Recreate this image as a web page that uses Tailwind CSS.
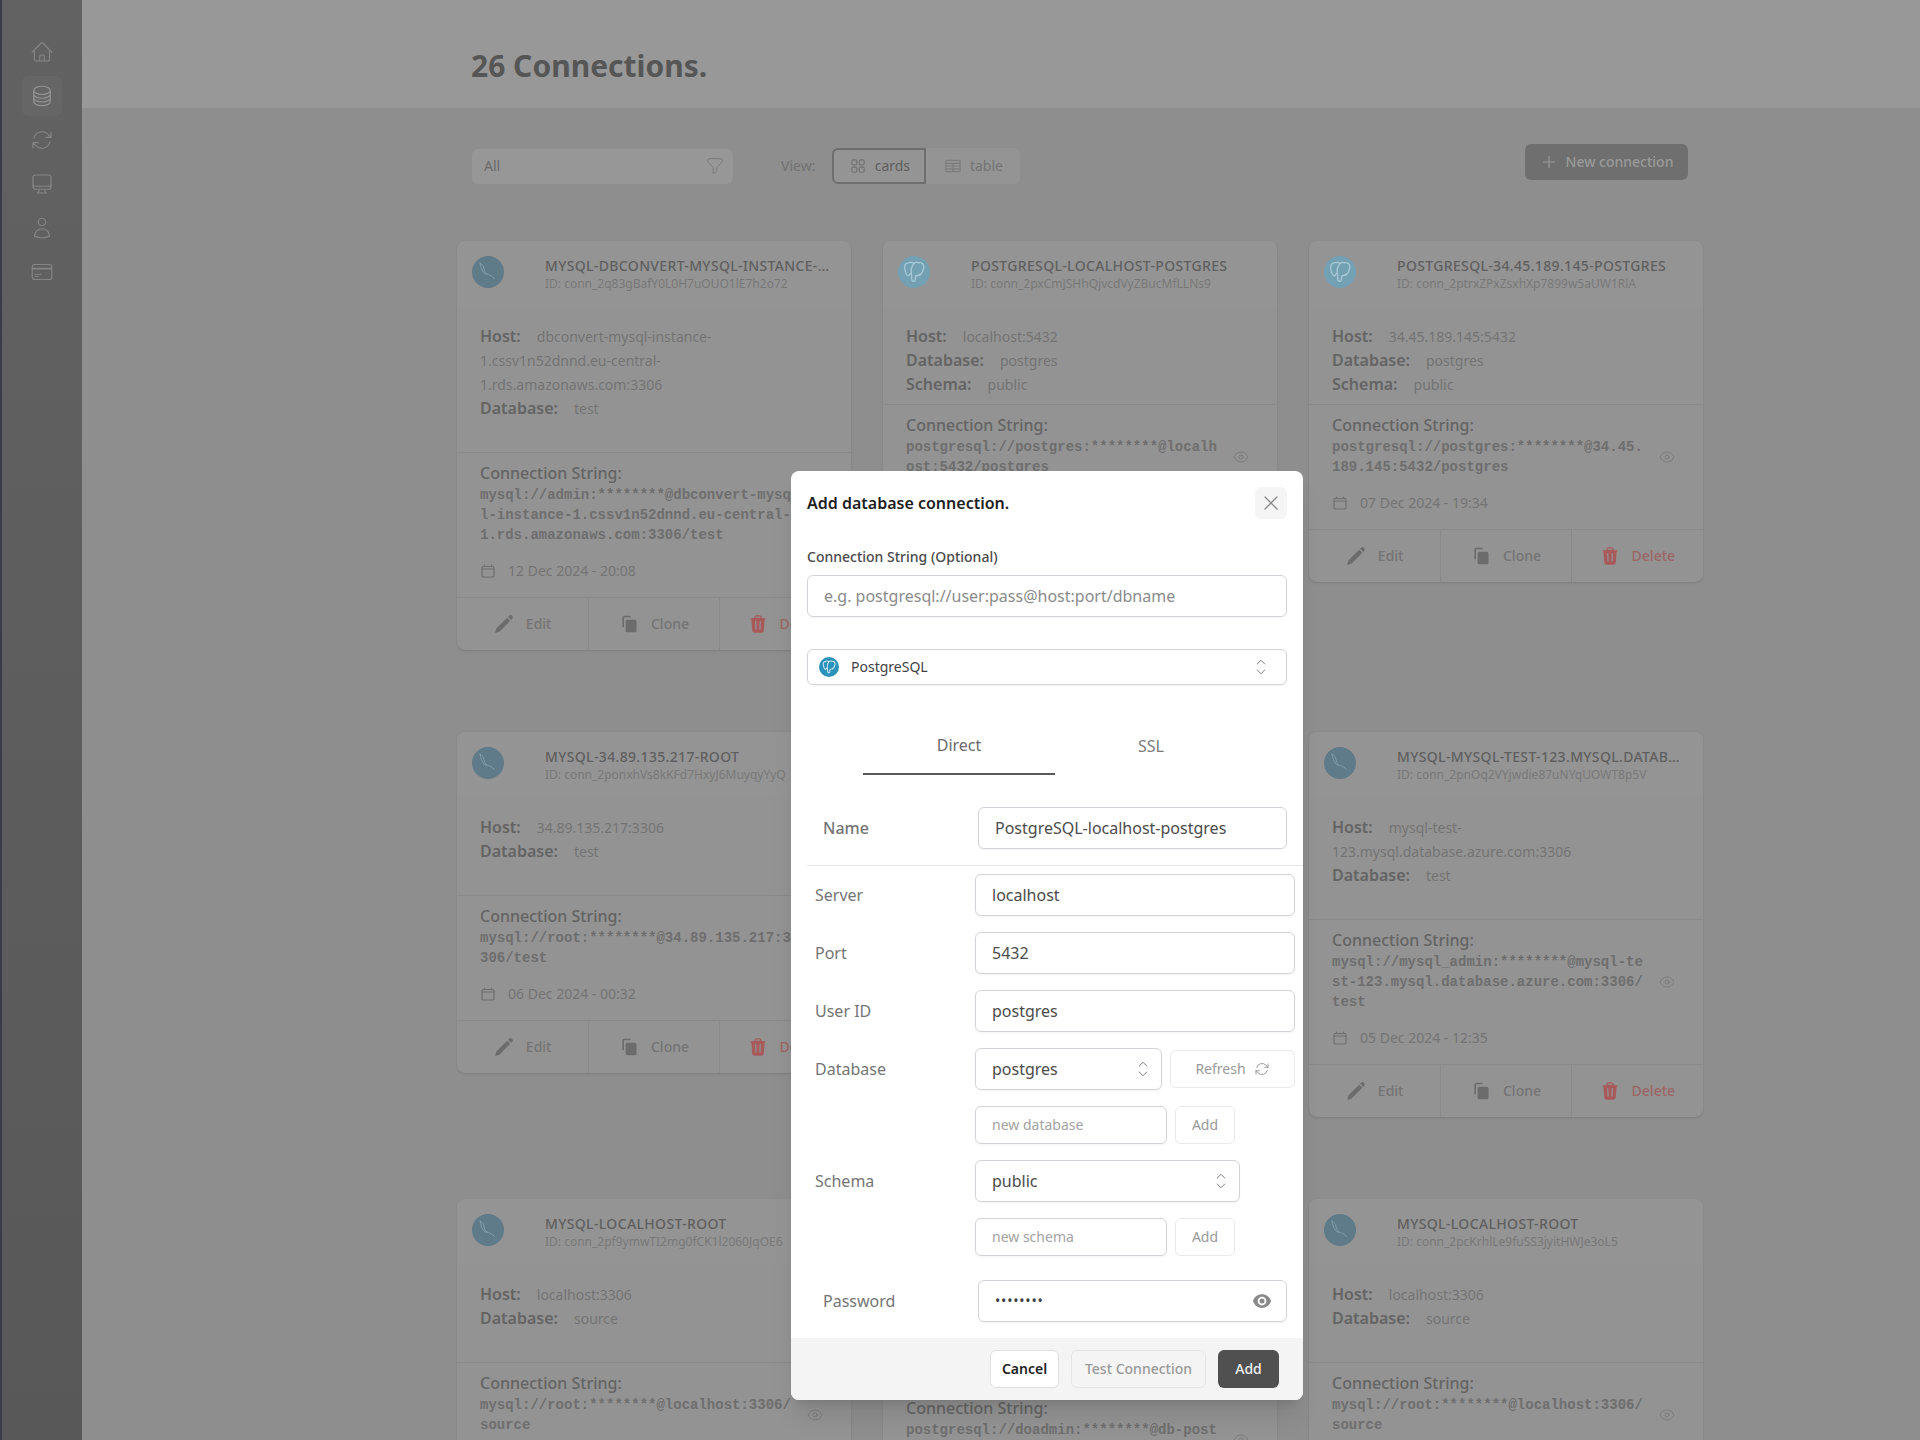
<!DOCTYPE html>
<html lang="en">
<head>
<meta charset="UTF-8">
<title>Connections</title>
<script src="https://cdn.jsdelivr.net/npm/@tailwindcss/browser@4"></script>
</head>
<body class="h-screen overflow-hidden bg-[#8e8e8e] font-['Noto_Sans',sans-serif]">
<div class="flex h-screen">

  <!-- sidebar, colours are the dimmed ones seen behind the modal -->
  <aside class="w-[82px] shrink-0 h-full border-l-2 border-[#3a3a48] bg-gradient-to-b from-[#626262] to-[#585858] pt-[30px] flex flex-col items-center text-[#858585]">
    <a class="w-10 h-11 flex items-center justify-center"><svg class="w-6 h-6" fill="none" viewBox="0 0 24 24" stroke="currentColor" stroke-width="1.2"><path stroke-linecap="round" stroke-linejoin="round" d="m2.25 12 8.954-8.955c.44-.439 1.152-.439 1.591 0L21.75 12M4.5 9.75v10.125c0 .621.504 1.125 1.125 1.125H9.75v-4.875c0-.621.504-1.125 1.125-1.125h2.25c.621 0 1.125.504 1.125 1.125V21h4.125c.621 0 1.125-.504 1.125-1.125V9.75M8.25 21h8.25"/></svg></a>
    <a class="w-10 h-10 my-[2px] flex items-center justify-center rounded-md bg-[#666666] text-[#959595]"><svg class="w-6 h-6" fill="none" viewBox="0 0 24 24" stroke="currentColor" stroke-width="1.2"><path stroke-linecap="round" stroke-linejoin="round" d="M20.25 6.375c0 2.278-3.694 4.125-8.25 4.125S3.75 8.653 3.75 6.375m16.5 0c0-2.278-3.694-4.125-8.25-4.125S3.75 4.097 3.75 6.375m16.5 0v11.25c0 2.278-3.694 4.125-8.25 4.125s-8.25-1.847-8.25-4.125V6.375m16.5 0v3.75m-16.5-3.75v3.75m16.5 0v3.75C20.25 16.153 16.556 18 12 18s-8.25-1.847-8.25-4.125v-3.75m16.5 0c0 2.278-3.694 4.125-8.25 4.125s-8.25-1.847-8.25-4.125"/></svg></a>
    <a class="w-10 h-11 flex items-center justify-center"><svg class="w-6 h-6" fill="none" viewBox="0 0 24 24" stroke="currentColor" stroke-width="1.2"><path stroke-linecap="round" stroke-linejoin="round" d="M16.023 9.348h4.992v-.001M2.985 19.644v-4.992m0 0h4.992m-4.993 0 3.181 3.183a8.25 8.25 0 0 0 13.803-3.7M4.031 9.865a8.25 8.25 0 0 1 13.803-3.7l3.181 3.182m0-4.991v4.99"/></svg></a>
    <a class="w-10 h-11 flex items-center justify-center"><svg class="w-6 h-6" fill="none" viewBox="0 0 24 24" stroke="currentColor" stroke-width="1.2"><path stroke-linecap="round" stroke-linejoin="round" d="M9 17.25v1.007a3 3 0 0 1-.879 2.122L7.5 21h9l-.621-.621A3 3 0 0 1 15 18.257V17.25m6-12V15a2.25 2.25 0 0 1-2.25 2.25H5.25A2.25 2.25 0 0 1 3 15V5.25m18 0A2.25 2.25 0 0 0 18.75 3H5.25A2.25 2.25 0 0 0 3 5.25m18 0V12a2.25 2.25 0 0 1-2.25 2.25H5.25A2.25 2.25 0 0 1 3 12V5.25"/></svg></a>
    <a class="w-10 h-11 flex items-center justify-center"><svg class="w-6 h-6" fill="none" viewBox="0 0 24 24" stroke="currentColor" stroke-width="1.2"><path stroke-linecap="round" stroke-linejoin="round" d="M15.75 6a3.75 3.75 0 1 1-7.5 0 3.75 3.75 0 0 1 7.5 0ZM4.501 20.118a7.5 7.5 0 0 1 14.998 0A17.933 17.933 0 0 1 12 21.75c-2.676 0-5.216-.584-7.499-1.632Z"/></svg></a>
    <a class="w-10 h-11 flex items-center justify-center"><svg class="w-6 h-6" fill="none" viewBox="0 0 24 24" stroke="currentColor" stroke-width="1.2"><path stroke-linecap="round" stroke-linejoin="round" d="M2.25 8.25h19.5M2.25 9h19.5m-16.5 5.25h6m-6 2.25h3m-3.75 3h15a2.25 2.25 0 0 0 2.25-2.25V6.75A2.25 2.25 0 0 0 19.5 4.5h-15a2.25 2.25 0 0 0-2.25 2.25v10.5A2.25 2.25 0 0 0 4.5 19.5Z"/></svg></a>
  </aside>

  <main class="flex-1 min-w-0">
    <header class="h-[108px] bg-[#989898] pl-[389px] pt-[22px] flex items-center">
      <h1 class="text-[30px] font-bold text-[#565656]">26 Connections.</h1>
    </header>

    <!-- toolbar -->
    <div class="mt-9 pl-[390px] pr-[232px] h-10 flex items-start justify-between">
      <div class="flex items-center mt-1">
        <div class="w-[261px] h-[35px] rounded-md bg-[#979797] pl-3 pr-2 flex items-center justify-between text-sm text-[#6a6a6a]">
          <span>All</span>
          <svg class="w-5 h-5 text-[#7a7a7a]" fill="none" viewBox="0 0 24 24" stroke="currentColor" stroke-width="1.2"><path stroke-linecap="round" stroke-linejoin="round" d="M12 3c2.755 0 5.455.232 8.083.678.533.09.917.556.917 1.096v1.044a2.25 2.25 0 0 1-.659 1.591l-5.432 5.432a2.25 2.25 0 0 0-.659 1.591v2.927a2.25 2.25 0 0 1-1.244 2.013L9.75 21v-6.568a2.25 2.25 0 0 0-.659-1.591L3.659 7.409A2.25 2.25 0 0 1 3 5.818V4.774c0-.54.384-1.006.917-1.096A48.32 48.32 0 0 1 12 3Z"/></svg>
        </div>
        <span class="ml-12 mr-[17px] text-sm text-[#717171]">View:</span>
        <div class="flex h-9 rounded-md bg-[#949494] text-sm">
          <button class="w-[94px] flex items-center justify-center gap-2 rounded-l-md border-2 border-[#6e6e6e] text-[#5e5e5e]">
            <svg class="w-[18px] h-[18px] text-[#727272]" fill="none" viewBox="0 0 24 24" stroke="currentColor" stroke-width="1.5"><path stroke-linecap="round" stroke-linejoin="round" d="M3.75 6A2.25 2.25 0 0 1 6 3.75h2.25A2.25 2.25 0 0 1 10.5 6v2.25a2.25 2.25 0 0 1-2.25 2.25H6a2.25 2.25 0 0 1-2.25-2.25V6ZM3.75 15.75A2.25 2.25 0 0 1 6 13.5h2.25a2.25 2.25 0 0 1 2.25 2.25V18a2.25 2.25 0 0 1-2.25 2.25H6A2.25 2.25 0 0 1 3.75 18v-2.25ZM13.5 6a2.25 2.25 0 0 1 2.25-2.25H18A2.25 2.25 0 0 1 20.25 6v2.25A2.25 2.25 0 0 1 18 10.5h-2.25a2.25 2.25 0 0 1-2.25-2.25V6ZM13.5 15.75a2.25 2.25 0 0 1 2.25-2.25H18a2.25 2.25 0 0 1 2.25 2.25V18A2.25 2.25 0 0 1 18 20.25h-2.25A2.25 2.25 0 0 1 13.5 18v-2.25Z"/></svg>
            cards
          </button>
          <button class="w-[94px] flex items-center justify-center gap-2 text-[#757575]">
            <svg class="w-[18px] h-[18px] text-[#7c7c7c]" fill="none" viewBox="0 0 24 24" stroke="currentColor" stroke-width="1.5"><rect x="2.5" y="4.5" width="19" height="15" rx="1.2"/><path d="M2.5 8.5h19M2.5 12h19M2.5 15.75h19M12 8.5v11"/></svg>
            table
          </button>
        </div>
      </div>
      <button class="w-[163px] h-9 rounded-md bg-[#6f6f6f] flex items-center justify-center gap-2 text-sm font-medium text-[#9a9a9a]">
        <svg class="w-[18px] h-[18px]" fill="none" viewBox="0 0 24 24" stroke="currentColor" stroke-width="1.5"><path stroke-linecap="round" stroke-linejoin="round" d="M12 4.5v15m7.5-7.5h-15"/></svg>
        New connection
      </button>
    </div>

    <div id="cards" class="mt-[57px] ml-[375px] w-[1246px] grid grid-cols-3 gap-x-8 gap-y-[82px] items-start"></div>
  </main>
</div>

<!-- add connection modal -->
<div class="absolute left-[791px] top-[471px] w-[512px] h-[929px] bg-white rounded-lg overflow-hidden flex flex-col shadow-xl">
  <div class="px-4 pt-4 flex items-center justify-between">
    <h2 class="text-base font-semibold text-[#1f1f1f]">Add database connection.</h2>
    <button class="w-8 h-8 rounded-md bg-[#f5f5f5] flex items-center justify-center text-[#8a8a8a]">
      <svg class="w-6 h-6" fill="none" viewBox="0 0 24 24" stroke="currentColor" stroke-width="1.3"><path stroke-linecap="round" stroke-linejoin="round" d="M6 18 18 6M6 6l12 12"/></svg>
    </button>
  </div>

  <div class="px-4 mt-7">
    <label class="block text-sm font-medium leading-5 text-[#4a4a4a]">Connection String (Optional)</label>
    <input class="mt-2 w-full h-[42px] px-4 rounded-md border border-[#d4d4d8] shadow-xs text-base placeholder:text-[#8b8b8b]" placeholder="e.g. postgresql://user:pass@host:port/dbname">
    <div class="mt-8 h-9 rounded-md border border-[#d4d4d8] shadow-xs pl-[11px] pr-[13px] flex items-center text-sm text-[#3f3f46]">
      <span class="w-5 h-5 rounded-full bg-[#2b93bb] flex items-center justify-center">
        <svg class="w-4 h-4" fill="none" viewBox="0 0 24 24" stroke="#cfe6ef" stroke-width="1.6"><path stroke-linecap="round" stroke-linejoin="round" d="M7 3.5C4 3.5 3 6 3.5 9c.4 2.5 1.5 6 3 6.5 1 .3 1.5-.8 2-2M16.5 3.5c3.5-.5 5 2 4.5 5-.4 2.5-2 5-3.5 6.5M7 3.5c2-.8 3.5-.5 5 .5 1.5-1.2 3-1.2 4.5-.5M12 4c-2.5 3-3 6-2.5 9 .3 2 .3 4 .5 6 .2 1.5 2 2 3 1 .5-.7.5-2 .5-4.5 1.5 0 3-.5 4-1.5"/></svg>
      </span>
      <span class="ml-3 flex-1">PostgreSQL</span>
      <svg class="w-6 h-6 text-[#7b7b7b]" fill="none" viewBox="0 0 24 24" stroke="currentColor" stroke-width="1"><path stroke-linecap="round" stroke-linejoin="round" d="M8.25 15 12 18.75 15.75 15m-7.5-6L12 5.25 15.75 9"/></svg>
    </div>
  </div>

  <div class="mt-[30px] pl-[72px] flex">
    <button class="w-48 h-[60px] pt-0.5 border-b-2 border-[#5a5a5a] text-base text-[#6b6b6b]">Direct</button>
    <button class="w-48 h-[60px] pt-0.5 text-base text-[#7a7a7a]">SSL</button>
  </div>

  <div class="mt-8 pl-8 pr-4 flex items-center">
    <label class="w-[155px] text-base font-medium text-[#757575]">Name</label>
    <input class="flex-1 min-w-0 h-[42px] px-4 rounded-md border border-[#d4d4d8] shadow-xs text-base text-[#4b4b4b]" value="PostgreSQL-localhost-postgres">
  </div>
  <div class="mt-4 ml-4 h-px bg-[#e5e5e5]"></div>

  <div class="mt-2 pl-6 pr-2 flex flex-col gap-4">
    <div class="flex items-center">
      <label class="w-40 text-base text-[#757575]">Server</label>
      <input class="flex-1 min-w-0 h-[42px] px-4 rounded-md border border-[#d4d4d8] shadow-xs text-base text-[#4b4b4b]" value="localhost">
    </div>
    <div class="flex items-center">
      <label class="w-40 text-base text-[#757575]">Port</label>
      <input class="flex-1 min-w-0 h-[42px] px-4 rounded-md border border-[#d4d4d8] shadow-xs text-base text-[#4b4b4b]" value="5432">
    </div>
    <div class="flex items-center">
      <label class="w-40 text-base text-[#757575]">User ID</label>
      <input class="flex-1 min-w-0 h-[42px] px-4 rounded-md border border-[#d4d4d8] shadow-xs text-base text-[#4b4b4b]" value="postgres">
    </div>
    <div class="flex items-center">
      <label class="w-40 text-base text-[#757575]">Database</label>
      <div class="w-[187px] h-[42px] pl-4 pr-1.5 rounded-md border border-[#d4d4d8] shadow-xs flex items-center justify-between text-base text-[#4b4b4b]">
        postgres
        <svg class="w-6 h-6 text-[#7b7b7b]" fill="none" viewBox="0 0 24 24" stroke="currentColor" stroke-width="1"><path stroke-linecap="round" stroke-linejoin="round" d="M8.25 15 12 18.75 15.75 15m-7.5-6L12 5.25 15.75 9"/></svg>
      </div>
      <button class="ml-2 flex-1 h-[38px] rounded-md border border-[#eaeaea] flex items-center justify-center gap-2 text-sm text-[#9a9a9a]">
        Refresh
        <svg class="w-4 h-4" fill="none" viewBox="0 0 24 24" stroke="currentColor" stroke-width="1.5"><path stroke-linecap="round" stroke-linejoin="round" d="M16.023 9.348h4.992v-.001M2.985 19.644v-4.992m0 0h4.992m-4.993 0 3.181 3.183a8.25 8.25 0 0 0 13.803-3.7M4.031 9.865a8.25 8.25 0 0 1 13.803-3.7l3.181 3.182m0-4.991v4.99"/></svg>
      </button>
    </div>
    <div class="flex items-center pl-40">
      <input class="w-[192px] h-[38px] px-4 pb-0.5 rounded-md border border-[#d4d4d8] shadow-xs text-sm placeholder:text-[#a3a3a3]" placeholder="new database">
      <button class="ml-2 w-[60px] h-[38px] rounded-md border border-[#eaeaea] text-sm text-[#9a9a9a]">Add</button>
    </div>
    <div class="flex items-center">
      <label class="w-40 text-base text-[#757575]">Schema</label>
      <div class="w-[265px] h-[42px] pl-4 pr-1.5 rounded-md border border-[#d4d4d8] shadow-xs flex items-center justify-between text-base text-[#4b4b4b]">
        public
        <svg class="w-6 h-6 text-[#7b7b7b]" fill="none" viewBox="0 0 24 24" stroke="currentColor" stroke-width="1"><path stroke-linecap="round" stroke-linejoin="round" d="M8.25 15 12 18.75 15.75 15m-7.5-6L12 5.25 15.75 9"/></svg>
      </div>
    </div>
    <div class="flex items-center pl-40">
      <input class="w-[192px] h-[38px] px-4 pb-0.5 rounded-md border border-[#d4d4d8] shadow-xs text-sm placeholder:text-[#a3a3a3]" placeholder="new schema">
      <button class="ml-2 w-[60px] h-[38px] rounded-md border border-[#eaeaea] text-sm text-[#9a9a9a]">Add</button>
    </div>
  </div>

  <div class="mt-6 pl-8 pr-4 flex items-center">
    <label class="w-[155px] text-base text-[#757575]">Password</label>
    <div class="flex-1 min-w-0 h-[42px] pl-4 pr-3.5 rounded-md border border-[#d4d4d8] shadow-xs flex items-center justify-between">
      <span class="text-sm text-[#3f3f46] tracking-[0.8px]">••••••••</span>
      <svg class="w-5 h-5 text-[#8a8a8a]" viewBox="0 0 24 24" fill="currentColor"><path d="M12 15a3 3 0 1 0 0-6 3 3 0 0 0 0 6Z"/><path fill-rule="evenodd" clip-rule="evenodd" d="M1.323 11.447C2.811 6.976 7.028 3.75 12.001 3.75c4.97 0 9.185 3.223 10.675 7.69.12.362.12.752 0 1.113-1.487 4.471-5.705 7.697-10.677 7.697-4.97 0-9.186-3.223-10.675-7.69a1.762 1.762 0 0 1 0-1.113ZM17.25 12a5.25 5.25 0 1 1-10.5 0 5.25 5.25 0 0 1 10.5 0Z"/></svg>
    </div>
  </div>

  <div class="mt-4 h-[62px] bg-[#f4f4f5] pr-6 flex items-center justify-end gap-3 text-sm">
    <button class="w-[69px] h-[38px] rounded-md border border-[#e0e0e0] bg-white font-semibold text-[#1f1f1f]">Cancel</button>
    <button class="w-[135px] h-[38px] rounded-md border border-[#e6e6e6] text-[#9a9a9a] font-medium">Test Connection</button>
    <button class="w-[61px] h-[38px] rounded-md bg-[#505050] text-[#f0f0f0] font-medium">Add</button>
  </div>
</div>

<script>
  var pgLogo = '<span class="w-8 h-8 shrink-0 rounded-full bg-[#74a0b4] flex items-center justify-center"><svg class="w-[26px] h-[26px]" fill="none" viewBox="0 0 24 24" stroke="#a9cbd9" stroke-width="1.2"><path stroke-linecap="round" stroke-linejoin="round" d="M7 3.5C4 3.5 3 6 3.5 9c.4 2.5 1.5 6 3 6.5 1 .3 1.5-.8 2-2M16.5 3.5c3.5-.5 5 2 4.5 5-.4 2.5-2 5-3.5 6.5M7 3.5c2-.8 3.5-.5 5 .5 1.5-1.2 3-1.2 4.5-.5M12 4c-2.5 3-3 6-2.5 9 .3 2 .3 4 .5 6 .2 1.5 2 2 3 1 .5-.7.5-2 .5-4.5 1.5 0 3-.5 4-1.5"/></svg></span>';
  var myLogo = '<span class="w-8 h-8 shrink-0 rounded-full bg-[#5f7a88] flex items-center justify-center"><svg class="w-8 h-8" fill="none" viewBox="0 0 32 32" stroke="#8aa5b3" stroke-width="0.8"><path stroke-linecap="round" stroke-linejoin="round" d="M8 7c2 1 3.5 3 4 5.5.5 2 1 4 2.5 5.5M8 7.5c.5 3 2 7 4 9.5.8 1 1.5 1.5 2.5 1M14.5 18c3 .5 6 2 8 4.5"/></svg></span>';
  var calIcon = '<svg class="w-4 h-4 shrink-0 text-[#6e6e6e]" fill="none" viewBox="0 0 24 24" stroke="currentColor" stroke-width="1.8"><path stroke-linecap="round" stroke-linejoin="round" d="M6.75 3v2.25M17.25 3v2.25M3 18.75V7.5a2.25 2.25 0 0 1 2.25-2.25h13.5A2.25 2.25 0 0 1 21 7.5v11.25A2.25 2.25 0 0 1 18.75 21H5.25A2.25 2.25 0 0 1 3 18.75ZM3 9h18"/></svg>';
  var eyeIcon = '<svg class="w-4 h-4 shrink-0 mr-1 self-center text-[#787878]" fill="none" viewBox="0 0 24 24" stroke="currentColor" stroke-width="1.3"><path stroke-linecap="round" stroke-linejoin="round" d="M2.036 12.322a1.012 1.012 0 0 1 0-.639C3.423 7.51 7.36 4.5 12 4.5c4.638 0 8.573 3.007 9.963 7.178.07.207.07.431 0 .639C20.577 16.49 16.64 19.5 12 19.5c-4.638 0-8.573-3.007-9.963-7.178Z"/><path stroke-linecap="round" stroke-linejoin="round" d="M15 12a3 3 0 1 1-6 0 3 3 0 0 1 6 0Z"/></svg>';
  var monoClass = "flex-1 min-w-0 break-all font-['Liberation_Mono',monospace] text-sm leading-5 font-bold text-[#6e6e6e]";

  function row(label, value) {
    return '<div class="leading-6"><span class="text-base font-semibold text-[#646464] mr-4">' + label + '</span><span class="text-sm text-[#737373]">' + value + '</span></div>';
  }

  function card(c) {
    var rows = row('Host:', c.host) + row('Database:', c.db);
    if (c.schema) rows += row('Schema:', c.schema);
    return '<div class="rounded-lg bg-[#939393] shadow overflow-hidden">'
      + '<div class="h-[66px] pl-[15px] pt-[15px] pr-5 flex gap-[41px] bg-[#949494]">' + (c.pg ? pgLogo : myLogo)
      + '<div class="min-w-0 flex-1"><div class="truncate text-sm leading-5 font-medium tracking-wide text-[#5f5f5f]">' + c.name + '</div>'
      + '<div class="truncate text-xs leading-4 text-[#787878]">ID: ' + c.id + '</div></div></div>'
      + '<div class="pl-[23px] pr-6 pt-[17px] ' + c.bodyH + '">' + rows + '</div>'
      + '<div class="border-t border-[#8a8a8a] pl-[23px] pr-6 pt-[8px] pb-4">'
      + '<div class="text-base font-medium leading-6 text-[#646464]">Connection String:</div>'
      + '<div class="flex gap-3"><div class="' + monoClass + '">' + c.conn + '</div>' + eyeIcon + '</div>'
      + '<div class="mt-4 h-5 flex items-center gap-3 text-sm text-[#747474]">' + calIcon + c.date + '</div></div>'
      + '<div class="h-[53px] border-t border-[#8a8a8a] grid grid-cols-3 text-sm font-medium text-[#747474]">'
      + '<button class="flex items-center justify-center gap-3"><svg class="w-5 h-5 text-[#6c6c6c]" viewBox="0 0 24 24" fill="currentColor"><path d="M21.731 2.269a2.625 2.625 0 0 0-3.712 0l-1.157 1.157 3.712 3.712 1.157-1.157a2.625 2.625 0 0 0 0-3.712ZM19.513 8.199l-3.712-3.712-12.15 12.15a5.25 5.25 0 0 0-1.32 2.214l-.8 2.685a.75.75 0 0 0 .933.933l2.685-.8a5.25 5.25 0 0 0 2.214-1.32L19.513 8.2Z"/></svg>Edit</button>'
      + '<button class="flex items-center justify-center gap-3 border-x border-[#8a8a8a]"><svg class="w-5 h-5 text-[#6c6c6c]" viewBox="0 0 24 24"><path fill="none" stroke="currentColor" stroke-width="2" d="M5 16V4.5A1.5 1.5 0 0 1 6.5 3H14"/><rect x="8" y="7" width="13" height="15" rx="2" fill="currentColor"/></svg>Clone</button>'
      + '<button class="flex items-center justify-center gap-3 text-[#9c6666]"><svg class="w-5 h-5 text-[#a85a5a]" viewBox="0 0 24 24" fill="currentColor"><path fill-rule="evenodd" clip-rule="evenodd" d="M16.5 4.478v.227a48.816 48.816 0 0 1 3.878.512.75.75 0 1 1-.256 1.478l-.209-.035-1.005 13.07a3 3 0 0 1-2.991 2.77H8.084a3 3 0 0 1-2.991-2.77L4.087 6.66l-.209.035a.75.75 0 0 1-.256-1.478A48.567 48.567 0 0 1 7.5 4.705v-.227c0-1.564 1.213-2.9 2.816-2.951a52.662 52.662 0 0 1 3.369 0c1.603.051 2.815 1.387 2.815 2.951Zm-6.136-1.452a51.196 51.196 0 0 1 3.273 0C14.39 3.05 15 3.684 15 4.478v.113a49.488 49.488 0 0 0-6 0v-.113c0-.794.609-1.428 1.364-1.452Zm-.355 5.945a.75.75 0 1 0-1.5.058l.347 9a.75.75 0 1 0 1.499-.058l-.346-9Zm5.48.058a.75.75 0 1 0-1.498-.058l-.347 9a.75.75 0 0 0 1.5.058l.345-9Z"/></svg>Delete</button>'
      + '</div></div>';
  }

  var connections = [
    { name: 'MYSQL-DBCONVERT-MYSQL-INSTANCE-1.CSSV1N52DNND', id: 'conn_2q83gBafY0L0H7uOUO1lE7h2o72', host: 'dbconvert-mysql-instance-1.cssv1n52dnnd.eu-central-1.rds.amazonaws.com:3306', db: 'test', bodyH: 'h-[145px]', conn: 'mysql://admin:********@dbconvert-mysql-instance-1.cssv1n52dnnd.eu-central-1.rds.amazonaws.com:3306/test', date: '12 Dec 2024 - 20:08' },
    { pg: true, name: 'POSTGRESQL-LOCALHOST-POSTGRES', id: 'conn_2pxCmJSHhQjvcdVyZBucMfLLNs9', host: 'localhost:5432', db: 'postgres', schema: 'public', bodyH: 'h-[97px]', conn: 'postgresql://postgres:********@localhost:5432/postgres', date: '07 Dec 2024 - 19:35' },
    { pg: true, name: 'POSTGRESQL-34.45.189.145-POSTGRES', id: 'conn_2ptrxZPxZsxhXp7899w5aUW1RlA', host: '34.45.189.145:5432', db: 'postgres', schema: 'public', bodyH: 'h-[97px]', conn: 'postgresql://postgres:********@34.45.189.145:5432/postgres', date: '07 Dec 2024 - 19:34' },
    { name: 'MYSQL-34.89.135.217-ROOT', id: 'conn_2ponxhVs8kKFd7HxyJ6MuyqyYyQ', host: '34.89.135.217:3306', db: 'test', bodyH: 'h-[97px]', conn: 'mysql://root:********@34.89.135.217:3306/test', date: '06 Dec 2024 - 00:32' },
    null,
    { name: 'MYSQL-MYSQL-TEST-123.MYSQL.DATABASE.AZURE.COM', id: 'conn_2pnOq2VYjwdie87uNYqUOWT8p5V', host: 'mysql-test-123.mysql.database.azure.com:3306', db: 'test', bodyH: 'h-[121px]', conn: 'mysql://mysql_admin:********@mysql-test-123.mysql.database.azure.com:3306/test', date: '05 Dec 2024 - 12:35' },
    { name: 'MYSQL-LOCALHOST-ROOT', id: 'conn_2pf9ymwTI2mg0fCK1l2060JqOE6', host: 'localhost:3306', db: 'source', bodyH: 'h-[97px]', conn: 'mysql://root:********@localhost:3306/source', date: '' },
    { pg: true, name: 'POSTGRESQL-DB-POSTGRESQL', id: '', host: 'db-postgresql', db: 'defaultdb', bodyH: 'h-[122px]', conn: 'postgresql://doadmin:********@db-postgresql', date: '' },
    { name: 'MYSQL-LOCALHOST-ROOT', id: 'conn_2pcKrhlLe9fuSS3jyitHWJe3oL5', host: 'localhost:3306', db: 'source', bodyH: 'h-[97px]', conn: 'mysql://root:********@localhost:3306/source', date: '' }
  ];

  var html = '';
  connections.forEach(function (c) {
    // the card in the middle of row two sits fully behind the modal
    html += c ? card(c) : '<div class="h-[385px] rounded-lg bg-[#939393]"></div>';
  });
  document.getElementById('cards').innerHTML = html;
</script>
</body>
</html>
